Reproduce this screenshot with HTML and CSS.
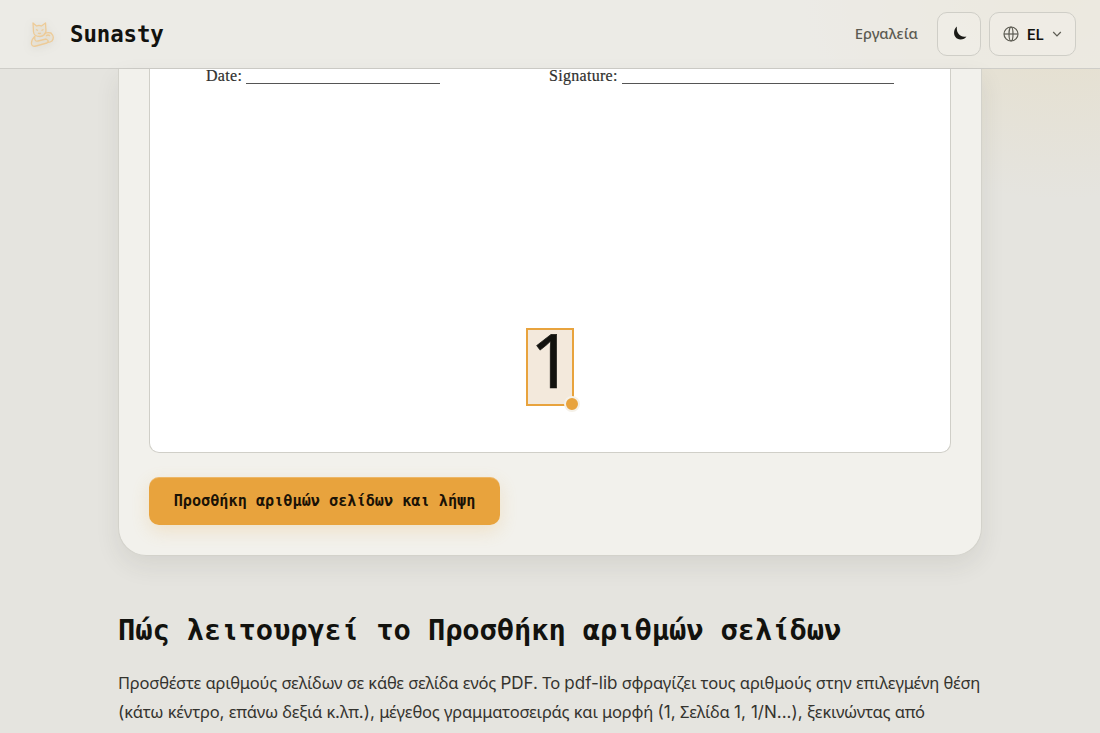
FILE: index.html
```
<!DOCTYPE html>
<html lang="el">
<head>
  <meta charset="UTF-8">
  <meta name="viewport" content="width=device-width, initial-scale=1.0">
  <title>Sunasty</title>
  <link rel="stylesheet" href="styles.css">
</head>
<body>
  <header>
    <div class="brand">
      <svg class="logo" viewBox="0 0 32 32" width="32" height="32">
        <path d="M7.500 14 L7 5 L10.500 8 Q13 7 15.500 8 L19.500 5 L20 13 Q19 18 14 18.500 Q8 18.500 7.500 14Z"/>
        <path d="M10 11.500 L12 12.500 M15.500 12.500 L17.500 11.500 M12 15 Q13.500 16 15 15"/>
        <path d="M9 18 Q5 22 5.500 26 Q6 29 10 28 L21 25 Q24 23 20 21 L12 23 Q8 24 9 18"/>
        <path d="M18 16 Q21 14 25 15 Q29 19 26 23 Q23 25 21 24 M20 18 Q22 16 24 18"/>
      </svg>
      <span class="name">Sunasty</span>
    </div>
    <nav>
      <a>Εργαλεία</a>
      <button class="icon-btn">
        <svg viewBox="0 0 14 14" width="14" height="14">
          <path d="M4 .6 C-1 4.500 .5 13.400 7.500 13.400 C10 13.400 12.500 12.500 13.400 10.400 C7.500 12 2.800 7 4 .6Z"/>
        </svg>
      </button>
      <button class="lang-btn">
        <svg class="globe" viewBox="0 0 16 16" width="16" height="16">
          <circle cx="8" cy="8" r="7"/>
          <ellipse cx="8" cy="8" rx="2" ry="7"/>
          <path d="M1 8 H15"/>
        </svg>
        <span>EL</span>
        <svg class="arrow" viewBox="0 0 10 10" width="10" height="10">
          <path d="M1.200 3 L5 6.800 L8.800 3"/>
        </svg>
      </button>
    </nav>
  </header>
  <main>
    <section class="card">
      <div class="preview">
        <div class="sign-line">
          <span>Date: <i class="rule date"></i></span>
          <span>Signature: <i class="rule signature"></i></span>
        </div>
        <div class="page-number">1<span class="handle"></span></div>
      </div>
      <button class="download">Προσθήκη αριθμών σελίδων και λήψη</button>
    </section>
    <section class="about">
      <h2>Πώς λειτουργεί το Προσθήκη αριθμών σελίδων</h2>
      <p>Προσθέστε αριθμούς σελίδων σε κάθε σελίδα ενός <span class="latin">PDF.</span> Το <span class="latin">pdf-lib</span> σφραγίζει τους αριθμούς στην επιλεγμένη θέση<br><span class="latin">(</span>κάτω κέντρο<span class="latin">,</span> επάνω δεξιά κ<span class="latin">.</span>λπ<span class="latin">.),</span> μέγεθος γραμματοσειράς και μορφή <span class="latin">(1,</span> Σελίδα <span class="latin">1, 1/N...),</span> ξεκινώντας από</p>
    </section>
  </main>
</body>
</html>
```

FILE: styles.css
```
* {
  margin: 0;
  padding: 0;
  box-sizing: border-box;
}
body {
  height: 100vh;
  overflow: hidden;
  font-family: "Noto Sans", sans-serif;
  color: #12120e;
  background:
    radial-gradient(ellipse 260px 210px at 1060px -10px, rgba(232, 200, 120, 0.2), transparent),
    #e5e4df;
}
button {
  font-family: inherit;
  color: inherit;
}
header {
  height: 69px;
  padding: 0 24px;
  display: flex;
  align-items: center;
  justify-content: space-between;
  background-color: rgba(239, 238, 234, 0.65);
  border-bottom: 1px solid #cecdc8;
}
.brand {
  display: flex;
  align-items: center;
  gap: 12px;
}
.logo {
  margin-left: 2px;
  fill: rgba(237, 203, 152, 0.12);
  stroke: #edcb98;
  stroke-width: 1.3;
  stroke-linejoin: round;
  filter: drop-shadow(0 2px 4px rgba(80, 80, 60, 0.15));
}
.name {
  font-family: "DejaVu Sans Mono", monospace;
  font-weight: 700;
  font-size: 22.4px;
  letter-spacing: -0.1px;
}
nav {
  display: flex;
  align-items: center;
  gap: 8px;
}
nav a {
  margin: -2px 11px 0 0;
  font-size: 14.8px;
  font-weight: 500;
  color: #5c5b52;
}
.icon-btn, .lang-btn {
  height: 44px;
  display: flex;
  align-items: center;
  justify-content: center;
  background-color: rgba(242, 240, 233, 0.5);
  border: 1px solid #cfcec7;
  border-radius: 10px;
}
.icon-btn {
  width: 44px;
  padding: 0 0 3px 2px;
  fill: #1a1a16;
}
.lang-btn {
  width: 87px;
  gap: 8px;
  font-family: Inter, sans-serif;
  font-size: 14.4px;
  font-weight: 600;
}
.globe, .arrow {
  fill: none;
  stroke: #5c5b52;
  stroke-width: 1.2;
}
main {
  width: 864px;
  margin: 0 auto;
}
.card {
  height: 487px;
  padding: 0 30px;
  background-color: #f2f1ec;
  border: 1px solid #d3d2cb;
  border-top: none;
  border-radius: 0 0 28px 28px;
  box-shadow: 0 10px 24px rgba(60, 60, 40, 0.09);
}
.preview {
  height: 384px;
  background-color: white;
  border: 1px solid #d0cfc8;
  border-top: none;
  border-radius: 0 0 10px 10px;
}
.sign-line {
  display: grid;
  grid-template-columns: 343px 1fr;
  height: 259px;
  padding-left: 56px;
  font-family: "Liberation Serif", serif;
  font-size: 16px;
  line-height: 14px;
  letter-spacing: 0.3px;
  color: #30302e;
  -webkit-text-stroke: 0.2px #30302e;
}
.rule {
  display: inline-block;
  height: 1px;
  vertical-align: -3px;
  background-color: #555;
}
.date {
  width: 194px;
}
.signature {
  width: 272px;
}
.page-number {
  position: relative;
  width: 48px;
  height: 78px;
  margin: 0 auto;
  border: 2px solid #e8a33d;
  background-color: #f3e9dc;
  font-family: "Noto Sans", sans-serif;
  font-size: 75px;
  line-height: 58px;
  text-align: center;
  text-indent: 2px;
  -webkit-text-stroke: 0.6px #12120e;
}
.handle {
  position: absolute;
  right: -8px;
  bottom: -8px;
  width: 16px;
  height: 16px;
  background-color: #e8a33d;
  border: 2px solid #f5f1e9;
  border-radius: 50%;
}
.download {
  display: block;
  width: 351px;
  height: 48px;
  margin-top: 24px;
  border: none;
  border-radius: 10px;
  background-color: #e8a33d;
  box-shadow: 0 6px 18px rgba(232, 163, 61, 0.2), inset 0 1px 0 rgba(255, 255, 255, 0.22);
  font-family: "DejaVu Sans Mono", monospace;
  font-size: 15.2px;
  font-weight: 700;
  color: #1a1206;
}
.about {
  padding: 53px 0 0;
}
h2 {
  font-family: "DejaVu Sans Mono", monospace;
  font-size: 28.8px;
  line-height: 42px;
  letter-spacing: -0.12px;
  white-space: nowrap;
}
p {
  margin-top: 17px;
  font-size: 16.5px;
  line-height: 29px;
  letter-spacing: -0.2px;
  word-spacing: 0.3px;
  white-space: nowrap;
  color: #34332e;
}
.latin {
  font-family: Inter, sans-serif;
  font-size: 17px;
  letter-spacing: 0;
  line-height: 1;
}
```
